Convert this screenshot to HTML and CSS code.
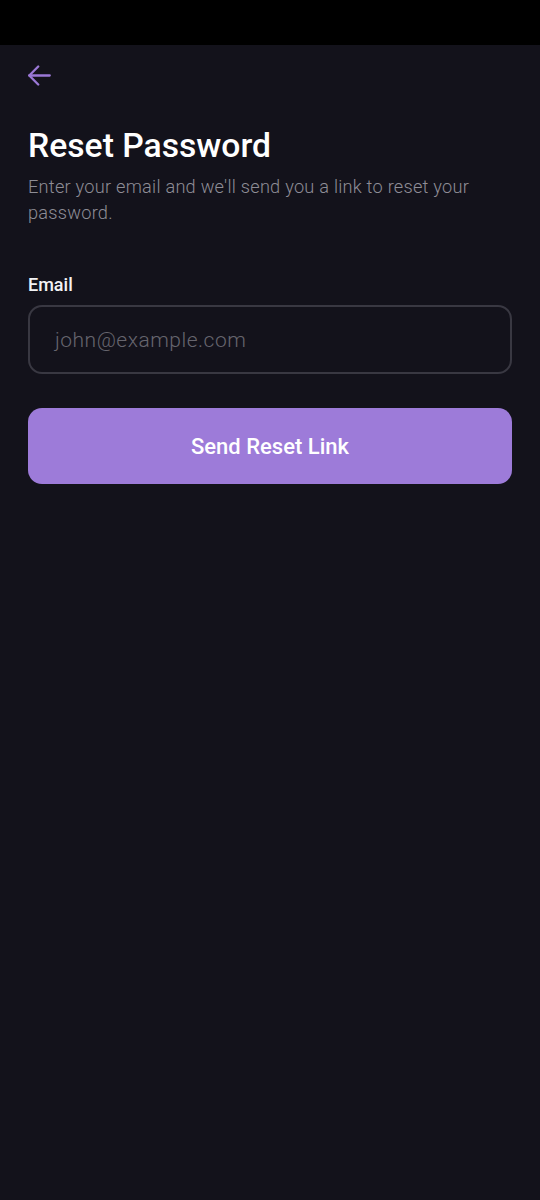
FILE: index.html
```html
<!DOCTYPE html>
<html>
<head>
<meta charset="utf-8">
<link rel="stylesheet" href="styles.css">
</head>
<body>
<div class="status"></div>
<main class="screen">
  <button class="back" aria-label="Back">
    <svg width="23" height="23" viewBox="3 3 18 18" fill="none" stroke="#9b78d6" stroke-width="1.8" stroke-linecap="round" stroke-linejoin="round"><path d="M20 12H4"/><path d="M11 5l-7 7 7 7"/></svg>
  </button>
  <h1 class="title">Reset Password</h1>
  <p class="subtitle">Enter your email and we'll send you a link to reset your password.</p>
  <label class="label">Email</label>
  <div class="field"><span class="placeholder">john@example.com</span></div>
  <button class="primary">Send Reset Link</button>
</main>
</body>
</html>
```
FILE: styles.css
```css
html, body { margin: 0; padding: 0; }
body { background: #13121b; font-family: Roboto, "Noto Sans", sans-serif; width: 540px; height: 1200px; overflow: hidden; }
.status { height: 45px; background: #000; }
.screen { padding: 0 28px; display: flex; flex-direction: column; }
.back { background: none; border: 0; padding: 0; margin: 19px 0 0 0; width: 23px; height: 23px; display: flex; }
.title { margin: 39px 0 0; font-size: 33.7px; font-weight: 500; color: #fff; line-height: 40px; }
.subtitle { margin: 8px 0 0; font-size: 18.2px; font-weight: 300; color: #8e8d96; line-height: 26px; letter-spacing: 0.24px; }
.label { margin-top: 48px; font-size: 18px; font-weight: 500; color: #f2f2f5; line-height: 22px; }
.field { margin-top: 9px; height: 69px; box-sizing: border-box; border: 2px solid #393842; border-radius: 14px; display: flex; align-items: center; padding: 0 25px; }
.placeholder { font-size: 21px; font-weight: 300; color: #66656e; letter-spacing: 0.5px; }
.primary { margin-top: 34px; height: 76px; border: 0; border-radius: 14px; background: #9d7bd9; color: #fff; font-family: Roboto, sans-serif; font-size: 22px; font-weight: 500; }
```
